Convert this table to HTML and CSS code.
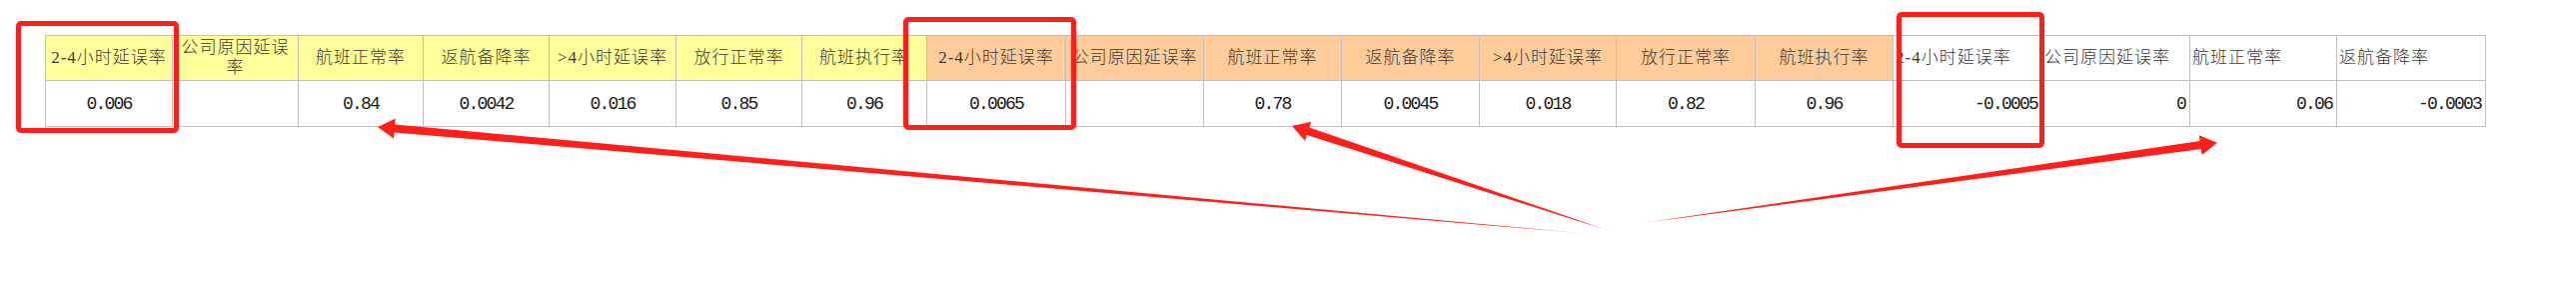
FILE: index.html
```html
<!DOCTYPE html>
<html lang="zh-CN">
<head>
<meta charset="utf-8">
<title>航班指标对比</title>
<link rel="stylesheet" href="styles.css">
</head>
<body>
<div class="page">
  <table class="sheet">
    <colgroup>
      <col class="w127"><col class="w126"><col class="w125"><col class="w126"><col class="w127"><col class="w126"><col class="w125">
      <col class="w139"><col class="w138"><col class="w138"><col class="w138"><col class="w137"><col class="w139"><col class="w138">
      <col class="w149"><col class="w148"><col class="w147"><col class="w149">
    </colgroup>
    <tr class="head">
      <th class="y">2-4小时延误率</th>
      <th class="y">公司原因延误率</th>
      <th class="y">航班正常率</th>
      <th class="y">返航备降率</th>
      <th class="y">&gt;4小时延误率</th>
      <th class="y">放行正常率</th>
      <th class="y">航班执行率</th>
      <th class="o">2-4小时延误率</th>
      <th class="o">公司原因延误率</th>
      <th class="o">航班正常率</th>
      <th class="o">返航备降率</th>
      <th class="o">&gt;4小时延误率</th>
      <th class="o">放行正常率</th>
      <th class="o">航班执行率</th>
      <th class="w">2-4小时延误率</th>
      <th class="w">公司原因延误率</th>
      <th class="w">航班正常率</th>
      <th class="w">返航备降率</th>
    </tr>
    <tr class="data">
      <td class="c">0.006</td>
      <td class="c"></td>
      <td class="c">0.84</td>
      <td class="c">0.0042</td>
      <td class="c">0.016</td>
      <td class="c">0.85</td>
      <td class="c">0.96</td>
      <td class="c">0.0065</td>
      <td class="c"></td>
      <td class="c">0.78</td>
      <td class="c">0.0045</td>
      <td class="c">0.018</td>
      <td class="c">0.82</td>
      <td class="c">0.96</td>
      <td class="r">-0.0005</td>
      <td class="r">0</td>
      <td class="r">0.06</td>
      <td class="r">-0.0003</td>
    </tr>
  </table>

  <div class="mark mark1"></div>
  <div class="mark mark2"></div>
  <div class="mark mark3"></div>

  <svg class="arrows" width="2578" height="304" viewBox="0 0 2578 304" aria-hidden="true">
    <defs>
      <linearGradient id="g1" gradientUnits="userSpaceOnUse" x1="1603" y1="235" x2="1523" y2="228">
        <stop offset="0" stop-color="#ff1f1a" stop-opacity="0"/>
        <stop offset="1" stop-color="#ff1f1a" stop-opacity="1"/>
      </linearGradient>
      <linearGradient id="g2" gradientUnits="userSpaceOnUse" x1="1617" y1="233" x2="1579" y2="220.5">
        <stop offset="0" stop-color="#ff1f1a" stop-opacity="0"/>
        <stop offset="1" stop-color="#ff1f1a" stop-opacity="1"/>
      </linearGradient>
      <linearGradient id="g3" gradientUnits="userSpaceOnUse" x1="1637" y1="224" x2="1677" y2="218.5">
        <stop offset="0" stop-color="#ff1f1a" stop-opacity="0"/>
        <stop offset="1" stop-color="#ff1f1a" stop-opacity="1"/>
      </linearGradient>
    </defs>
    <polygon fill="url(#g1)" points="1603,235 395.3,124.5 395.8,118.5 378,127 394.0,138.5 394.6,132.5"/>
    <polygon fill="url(#g2)" points="1617,233 1310.4,127.5 1312.2,121.8 1293,126 1306.0,140.8 1307.8,135.1"/>
    <polygon fill="url(#g3)" points="1637,224 2201.6,141.1 2200.8,135.2 2219,142.7 2203.6,155.0 2202.8,149.1"/>
  </svg>
</div>
</body>
</html>
```

FILE: styles.css
```css
html, body {
  margin: 0;
  padding: 0;
  background: #ffffff;
}

.page {
  position: relative;
  width: 2578px;
  height: 304px;
  padding: 35px 0 0 45px;
  box-sizing: border-box;
  overflow: hidden;
}

.sheet {
  border-collapse: collapse;
  table-layout: fixed;
  width: 2443px;
}

.w125 { width: 125px; }
.w126 { width: 126px; }
.w127 { width: 127px; }
.w137 { width: 137px; }
.w138 { width: 138px; }
.w139 { width: 139px; }
.w147 { width: 147px; }
.w148 { width: 148px; }
.w149 { width: 149px; }

.sheet th,
.sheet td {
  border: 1px solid #c0c0c0;
  overflow: visible;
  white-space: normal;
  vertical-align: middle;
}

.head {
  height: 45px;
}

.head th {
  font-family: "Liberation Serif", "Noto Sans CJK SC", serif;
  font-weight: 300;
  font-size: 17px;
  letter-spacing: 1px;
  line-height: 20px;
  color: #3a3a3a;
  text-align: center;
  padding: 0 1px;
}

.head th.y { background: #ffff99; }
.head th.o { background: #ffcc99; }
.head th.w {
  background: #ffffff;
  text-align: left;
  padding: 0 2px 0 2px;
}

.data {
  height: 46px;
}

.data td {
  font-family: "Liberation Mono", "DejaVu Sans Mono", monospace;
  font-size: 18px;
  letter-spacing: -1.8px;
  color: #1a1a1a;
  background: #ffffff;
  padding: 0 2px;
}

.data td.c { text-align: center; }
.data td.r { text-align: right; padding-right: 4px; }

.mark {
  position: absolute;
  box-sizing: border-box;
  border: 5px solid #ff1f1a;
  border-radius: 5px;
}

.mark1 { left: 16px; top: 21px; width: 163px; height: 112px; }
.mark2 { left: 904px; top: 17px; width: 173px; height: 113px; }
.mark3 { left: 1898px; top: 12px; width: 148px; height: 136px; }

.arrows {
  position: absolute;
  left: 0;
  top: 0;
  pointer-events: none;
}
```
